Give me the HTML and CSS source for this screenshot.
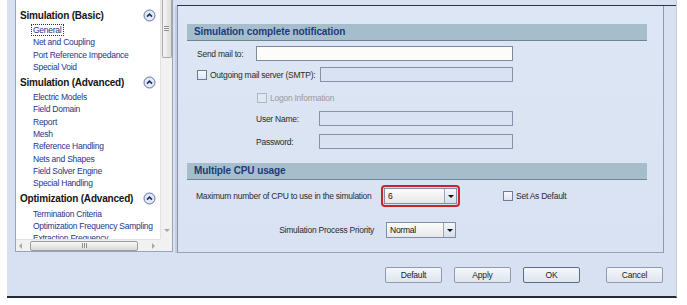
FILE: index.html
```html
<!DOCTYPE html>
<html>
<head>
    <link rel="stylesheet" href="styles.css">
</head>
<body>
<div class="dialog">
    <div class="main">
        <div class="nav">
            <div class="nav-list">
                <div class="nav-head">
                    <span>Simulation (Basic)</span>
                    <svg class="collapse" width="13" height="13" viewBox="0 0 13 13"><circle cx="6.5" cy="6.5" r="5.5" fill="#e3eaf5" stroke="#5d72a0"/><path d="M4 7.6 L6.5 5.1 L9 7.6" fill="none" stroke="#1d2f6e" stroke-width="1.6"/></svg>
                </div>
                <div class="nav-item"><span class="focus">General</span></div>
                <div class="nav-item"><span>Net and Coupling</span></div>
                <div class="nav-item"><span>Port Reference Impedance</span></div>
                <div class="nav-item"><span>Special Void</span></div>
                <div class="nav-head">
                    <span>Simulation (Advanced)</span>
                    <svg class="collapse" width="13" height="13" viewBox="0 0 13 13"><circle cx="6.5" cy="6.5" r="5.5" fill="#e3eaf5" stroke="#5d72a0"/><path d="M4 7.6 L6.5 5.1 L9 7.6" fill="none" stroke="#1d2f6e" stroke-width="1.6"/></svg>
                </div>
                <div class="nav-item"><span>Electric Models</span></div>
                <div class="nav-item"><span>Field Domain</span></div>
                <div class="nav-item"><span>Report</span></div>
                <div class="nav-item"><span>Mesh</span></div>
                <div class="nav-item"><span>Reference Handling</span></div>
                <div class="nav-item"><span>Nets and Shapes</span></div>
                <div class="nav-item"><span>Field Solver Engine</span></div>
                <div class="nav-item"><span>Special Handling</span></div>
                <div class="nav-head">
                    <span>Optimization (Advanced)</span>
                    <svg class="collapse" width="13" height="13" viewBox="0 0 13 13"><circle cx="6.5" cy="6.5" r="5.5" fill="#e3eaf5" stroke="#5d72a0"/><path d="M4 7.6 L6.5 5.1 L9 7.6" fill="none" stroke="#1d2f6e" stroke-width="1.6"/></svg>
                </div>
                <div class="nav-item"><span>Termination Criteria</span></div>
                <div class="nav-item"><span>Optimization Frequency Sampling</span></div>
                <div class="nav-item"><span>Extraction Frequency</span></div>
            </div>
            <div class="vscroll">
                <div class="vthumb"><span class="vgrip"></span></div>
                <span class="arrow-down"></span>
            </div>
            <div class="hscroll">
                <span class="arrow-left"></span>
                <div class="hthumb"><span class="hgrip"></span></div>
                <span class="arrow-right"></span>
            </div>
            <div class="corner"></div>
        </div>

        <div class="right">
            <div class="panel">
                <div class="section-head">Simulation complete notification</div>

                <div class="row row-mail">
                    <label class="lbl-mail">Send mail to:</label>
                    <div class="field field-mail"></div>
                </div>
                <div class="row row-smtp">
                    <div class="smtp-label">
                        <span class="check"></span>
                        <label>Outgoing mail server (SMTP):</label>
                    </div>
                    <div class="field field-off field-smtp"></div>
                </div>
                <div class="row row-logon">
                    <span class="check check-off"></span>
                    <label class="muted">Logon Information</label>
                </div>
                <div class="row row-user">
                    <label class="lbl-user">User Name:</label>
                    <div class="field field-off field-user"></div>
                </div>
                <div class="row row-pass">
                    <label class="lbl-user">Password:</label>
                    <div class="field field-off field-user"></div>
                </div>

                <div class="section-head section-cpu">Multiple CPU usage</div>

                <div class="row row-cpu">
                    <label class="lbl-cpu">Maximum number of CPU to use in the simulation</label>
                    <div class="highlight">
                        <div class="select select-cpu">
                            <span class="select-text">6</span>
                            <span class="select-btn"><span class="tri"></span></span>
                        </div>
                    </div>
                    <span class="check check-default"></span>
                    <label>Set As Default</label>
                </div>
                <div class="row row-priority">
                    <label class="lbl-priority">Simulation Process Priority</label>
                    <div class="select select-priority">
                        <span class="select-text">Normal</span>
                        <span class="select-btn"><span class="tri"></span></span>
                    </div>
                </div>
            </div>
        </div>
    </div>

    <div class="buttons">
        <button type="button">Default</button>
        <button type="button">Apply</button>
        <button type="button" class="btn-ok">OK</button>
        <button type="button" class="btn-cancel">Cancel</button>
    </div>
</div>
</body>
</html>
```

FILE: styles.css
```css
* {
    box-sizing: border-box;
}

body {
    margin: 0;
    background-color: #fff;
    font-family: "Liberation Sans", Arial, sans-serif;
    font-size: 8.5px;
    letter-spacing: -0.25px;
    color: #2b2b2b;
    overflow: hidden;
}

/* dialog frame */
.dialog {
    margin-left: 7px;
    width: 670px;
    height: 298px;
    padding-left: 8px;
    background-color: #d8e1f1;
    border-right: 1px solid #c2cbd9;
    border-bottom: 2px solid #262b35;
}

.main {
    display: flex;
    align-items: flex-start;
    height: 253px;
}

/* left navigation tree */
.nav {
    width: 158px;
    height: 252px;
    background-color: #fff;
    border: 1px solid #97a5b9;
    border-top: none;
    display: grid;
    grid-template-columns: 144px 12px;
    grid-template-rows: 239px 12px;
}

.nav-list {
    overflow: hidden;
    padding-top: 6px;
}

.nav-head {
    height: 18px;
    display: flex;
    align-items: center;
    justify-content: space-between;
    padding-left: 4px;
    padding-right: 4px;
    font-size: 10px;
    font-weight: bold;
    letter-spacing: -0.2px;
    color: #151515;
    white-space: nowrap;
}

.nav-item {
    height: 12.3px;
    line-height: 12.3px;
    padding-left: 17px;
    color: #26358a;
    white-space: nowrap;
}

.nav-item .focus {
    outline: 1px dotted #333;
    outline-offset: 0;
    padding: 0 1px;
    margin-left: -1px;
}

.vscroll {
    background-color: #f1f1f1;
    border-left: 1px solid #e2e2e2;
    display: flex;
    flex-direction: column;
    justify-content: space-between;
    align-items: center;
}

.vthumb {
    width: 10px;
    height: 58px;
    border: 1px solid #a9a9a9;
    border-top: none;
    border-radius: 0 0 2px 2px;
    background: linear-gradient(to right, #f6f6f6, #dcdcdc);
    display: flex;
    align-items: center;
    justify-content: center;
}

.vgrip {
    width: 5px;
    height: 5px;
    border-top: 1px solid #8a8a8a;
    border-bottom: 1px solid #8a8a8a;
    background: linear-gradient(#f6f6f6 40%, #8a8a8a 40%, #8a8a8a 60%, #f6f6f6 60%);
}

.arrow-down {
    margin-bottom: 7px;
    border-left: 3px solid transparent;
    border-right: 3px solid transparent;
    border-top: 3px solid #a8a8a8;
}

.hscroll {
    background-color: #f1f1f1;
    border-top: 1px solid #e2e2e2;
    display: flex;
    align-items: center;
    padding-left: 3px;
}

.arrow-left {
    border-top: 3px solid transparent;
    border-bottom: 3px solid transparent;
    border-right: 3px solid #a8a8a8;
}

.hthumb {
    width: 108px;
    height: 10px;
    margin-left: 8px;
    border: 1px solid #9c9c9c;
    border-radius: 2px;
    background: linear-gradient(#f8f8f8, #dadada);
    display: flex;
    align-items: center;
    justify-content: center;
}

.hgrip {
    width: 5px;
    height: 5px;
    border-left: 1px solid #8a8a8a;
    border-right: 1px solid #8a8a8a;
    background: linear-gradient(to right, #f2f2f2 40%, #8a8a8a 40%, #8a8a8a 60%, #f2f2f2 60%);
}

.arrow-right {
    margin-left: 14px;
    border-top: 3px solid transparent;
    border-bottom: 3px solid transparent;
    border-left: 3px solid #a8a8a8;
}

.corner {
    background-color: #f1f1f1;
}

/* right settings panel */
.right {
    flex: 1;
    margin-left: 4px;
    margin-top: 5px;
    padding-right: 12px;
    border-top: 1px solid #2d3440;
}

.panel {
    height: 247px;
    padding: 18px 0 0 9px;
    background: linear-gradient(#dde6f4, #d9e2f2);
    border-left: 1px solid #8593ab;
    border-right: 1px solid #8d9bb1;
    border-bottom: 1px solid #95a2b7;
    box-shadow: -2px 0 0 #c4cede;
}

.section-head {
    width: 460px;
    height: 17px;
    line-height: 16px;
    padding-left: 7px;
    background-color: #a6becb;
    border-bottom: 1px solid #6f8594;
    font-size: 10px;
    font-weight: bold;
    letter-spacing: -0.1px;
    color: #1c3a7a;
}

.row {
    display: flex;
    align-items: center;
    padding-left: 10px;
    white-space: nowrap;
}

.field {
    height: 15px;
    border: 1px solid #7b89a1;
    background-color: #fcfdf9;
}

.field-off {
    background-color: #d9e2f1;
    border-color: #8592a9;
}

.check {
    width: 10px;
    height: 10px;
    border: 1px solid #6b7b98;
    background: linear-gradient(#f6f8fb, #dfe5ee);
    margin-right: 3px;
    flex: none;
}

.check-off {
    border-color: #adb6c6;
    background: #e2e8f1;
}

.muted {
    color: #9a9a9a;
}

.row-mail {
    margin-top: 5px;
}

.lbl-mail {
    width: 59px;
}

.field-mail {
    width: 257px;
}

.row-smtp {
    margin-top: 6px;
}

.smtp-label {
    width: 123px;
    display: flex;
    align-items: center;
}

.field-smtp {
    width: 193px;
}

.row-logon {
    margin-top: 9px;
    height: 13px;
    padding-left: 70px;
}

.row-user {
    margin-top: 7px;
    padding-left: 69px;
}

.row-pass {
    margin-top: 8px;
    padding-left: 69px;
}

.lbl-user {
    width: 63px;
}

.field-user {
    width: 194px;
}

.section-cpu {
    margin-top: 14px;
}

.row-cpu {
    margin-top: 5px;
    padding-left: 9px;
}

.lbl-cpu {
    width: 185px;
}

.highlight {
    padding: 1px;
    border: 2px solid #c4262e;
    border-radius: 4px;
    margin-right: 43px;
}

.select {
    display: flex;
    height: 16px;
    border: 1px solid #7f8da6;
    background: linear-gradient(#fbfbfb, #e8e8e8);
}

.select-cpu {
    width: 73px;
}

.select-priority {
    width: 70px;
}

.select-text {
    flex: 1;
    padding-left: 3px;
    line-height: 14px;
    color: #111;
}

.select-btn {
    width: 12px;
    border-left: 1px solid #9aa6ba;
    background: linear-gradient(#f4f6fa, #d8dfe9);
    display: flex;
    align-items: center;
    justify-content: center;
}

.tri {
    border-left: 3px solid transparent;
    border-right: 3px solid transparent;
    border-top: 3px solid #111;
}

.row-priority {
    margin-top: 15px;
}

.lbl-priority {
    width: 177px;
    margin-right: 12px;
    text-align: right;
}

/* bottom buttons */
.buttons {
    display: flex;
    justify-content: flex-end;
    gap: 12px;
    margin-top: 14px;
    padding-right: 13px;
}

.buttons button {
    width: 57px;
    height: 16px;
    padding: 0;
    font-family: "Liberation Sans", Arial, sans-serif;
    font-size: 8.5px;
    letter-spacing: -0.2px;
    color: #222;
    background: linear-gradient(#f5f7fb, #dfe5ef);
    border: 1px solid #8d9ab0;
    border-radius: 2px;
}

.buttons .btn-ok {
    border-color: #5f6d84;
}

.buttons .btn-cancel {
    margin-left: 14px;
}
```
